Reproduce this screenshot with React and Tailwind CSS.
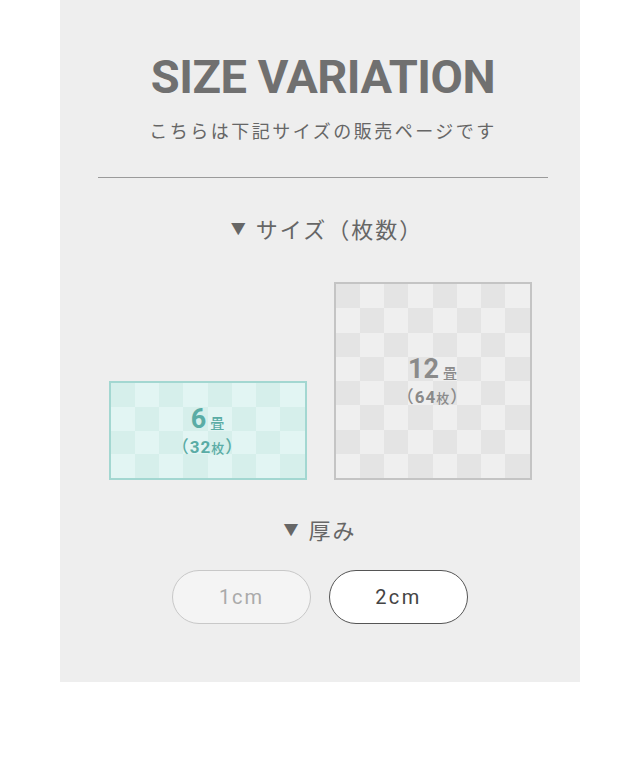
const Checker = ({ cols, rows, light, dark }) => (
  <div
    className="absolute inset-0 grid"
    style={{ gridTemplateColumns: `repeat(${cols}, 1fr)`, gridTemplateRows: `repeat(${rows}, 1fr)` }}
  >
    {Array.from({ length: cols * rows }).map((_, i) => {
      const r = Math.floor(i / cols);
      const c = i % cols;
      return <div key={i} style={{ background: (r + c) % 2 === 0 ? dark : light }} />;
    })}
  </div>
);

const Heading = ({ children }) => (
  <div className="flex items-center justify-center gap-2 text-[22px] tracking-[2px] text-[#666]">
    <span className="text-[15px]">▼</span>
    <span>{children}</span>
  </div>
);

const App = () => {
  return (
    <div className="w-[640px] h-[783px] bg-white" style={{ fontFamily: "'Noto Sans CJK JP', Roboto, sans-serif" }}>
      <div className="mx-auto w-[520px] h-[682px] bg-[#eeeeee] flex flex-col items-center">
        <h1
          className="mt-[51px] ml-[6px] text-[47px] leading-[52px] font-bold tracking-[-0.5px] text-[#707070]"
          style={{ fontFamily: "Roboto, sans-serif" }}
        >
          SIZE VARIATION
        </h1>
        <p className="mt-[15px] ml-[6px] text-[18px] leading-[24px] tracking-[2.5px] text-[#666]">
          こちらは下記サイズの販売ページです
        </p>
        <div className="mt-[35px] ml-[6px] w-[450px] h-px bg-[#9a9a9a]" />

        <div className="mt-[34px] ml-[14px]">
          <Heading>サイズ（枚数）</Heading>
        </div>

        <div className="mt-[37px] flex items-end gap-[27px]">
          <div className="relative w-[198px] h-[99px] border-2 border-[#a3d7d1]">
            <Checker cols={8} rows={4} light="#e2f5f3" dark="#d6efeb" />
            <div className="relative h-full flex flex-col items-center justify-center text-[#5aaca5] font-bold">
              <div className="flex items-baseline leading-none">
                <span className="text-[27px]" style={{ fontFamily: "Roboto, sans-serif" }}>6</span>
                <span className="text-[14px] ml-1 font-medium">畳</span>
              </div>
              <div className="mt-[4px] text-[17px] leading-none tracking-[1px] font-medium">
                （<span className="font-bold" style={{ fontFamily: "Roboto, sans-serif" }}>32</span><span className="text-[13px]">枚</span>）
              </div>
            </div>
          </div>
          <div className="relative w-[198px] h-[198px] border-2 border-[#c4c4c4]">
            <Checker cols={8} rows={8} light="#efefef" dark="#e4e4e4" />
            <div className="relative h-full flex flex-col items-center justify-center text-[#8a8a8a] font-bold">
              <div className="flex items-baseline leading-none">
                <span className="text-[27px]" style={{ fontFamily: "Roboto, sans-serif" }}>12</span>
                <span className="text-[14px] ml-1 font-medium">畳</span>
              </div>
              <div className="mt-[4px] text-[17px] leading-none tracking-[1px] font-medium">
                （<span className="font-bold" style={{ fontFamily: "Roboto, sans-serif" }}>64</span><span className="text-[13px]">枚</span>）
              </div>
            </div>
          </div>
        </div>

        <div className="mt-[33px]">
          <Heading>厚み</Heading>
        </div>

        <div className="mt-[24px] flex gap-[18px]">
          <div
            className="w-[139px] h-[54px] rounded-full border border-[#c8c8c8] bg-[#f4f4f4] flex items-center justify-center text-[20px] tracking-[2px] text-[#aaa]"
            style={{ fontFamily: "Roboto, sans-serif" }}
          >
            1cm
          </div>
          <div
            className="w-[139px] h-[54px] rounded-full border border-[#555] bg-white flex items-center justify-center text-[20px] tracking-[2.5px] text-[#444]"
            style={{ fontFamily: "Roboto, sans-serif" }}
          >
            2cm
          </div>
        </div>
      </div>
    </div>
  );
};

export default App;
